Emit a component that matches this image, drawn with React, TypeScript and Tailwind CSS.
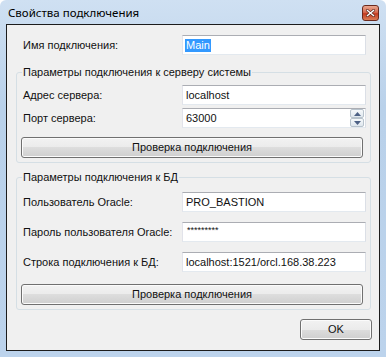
import React from 'react';

const font = { fontFamily: '"Liberation Sans", Arial, sans-serif' };

function TextBox({ value, selected, small }: { value: string; selected?: boolean; small?: boolean }) {
  return (
    <div className="w-[184px] h-[20px] bg-white border border-[#abadb3] border-l-[#e2e3ea] border-r-[#dbdfe6] border-b-[#e3e9ef] flex items-center pl-[2px] text-[11px] leading-[13px] text-[#111]">
      {selected ? (
        <span className="bg-[#3399ff] text-white px-[1px]">{value}</span>
      ) : small ? (
        <span className="px-[2px] text-[9px] leading-[9px] mb-[3px]">{value}</span>
      ) : (
        <span className="px-[1px]">{value}</span>
      )}
    </div>
  );
}

function SpinBox({ value }: { value: string }) {
  return (
    <div className="w-[184px] h-[20px] bg-white border border-[#abadb3] border-l-[#e2e3ea] border-r-[#dbdfe6] border-b-[#e3e9ef] flex items-center pl-[2px] text-[11px] leading-[13px] text-[#111]">
      <span className="flex-1 px-[1px]">{value}</span>
      <div className="flex flex-col w-[14px] h-[18px] mr-[1px]">
        <div className="h-[9px] border border-[#b8c3cc] rounded-[2px] bg-[linear-gradient(to_bottom,#f6f9fb,#dfe7ee)] flex items-center justify-center">
          <svg width="7" height="4" viewBox="0 0 7 4"><path d="M0 4 L3.5 0 L7 4 Z" fill="#4d6185" /></svg>
        </div>
        <div className="h-[9px] border border-[#b8c3cc] rounded-[2px] bg-[linear-gradient(to_bottom,#f6f9fb,#dfe7ee)] flex items-center justify-center">
          <svg width="7" height="4" viewBox="0 0 7 4"><path d="M0 0 L3.5 4 L7 0 Z" fill="#4d6185" /></svg>
        </div>
      </div>
    </div>
  );
}

function Button({ label, className }: { label: string; className?: string }) {
  return (
    <div
      className={
        'h-[21px] border border-[#707070] rounded-[3px] shadow-[inset_0_0_0_1px_#fbfbfb] bg-[linear-gradient(to_bottom,#f2f2f2_0%,#ebebeb_50%,#dddddd_50%,#cfcfcf_100%)] flex items-center justify-center text-[11px] text-[#111] ' +
        (className ?? '')
      }
    >
      {label}
    </div>
  );
}

function Row({ label, children, className }: { label: string; children: React.ReactNode; className?: string }) {
  return (
    <div className={'flex items-center ' + (className ?? '')}>
      <div className="w-[159px] text-[11px] leading-[13px] text-[#111]">{label}</div>
      {children}
    </div>
  );
}

export default function App() {
  return (
    <div className="w-[386px] h-[357px] bg-[linear-gradient(to_bottom,#cfe0f2,#b9d1ea_30%,#bcd3ec)] rounded-t-[6px] flex flex-col" style={font}>
      <div className="h-[24px] flex items-center pl-[8px] pr-[6px]">
        <span className="text-[11.5px] text-black flex-1 pt-[1px]" style={{ fontFamily: '"Noto Sans", "Liberation Sans", sans-serif' }}>
          Свойства подключения
        </span>
        <div className="w-[17px] h-[16px] rounded-[3px] border border-[#6b2a1e] bg-[linear-gradient(to_bottom,#eaa890,#d66a50_45%,#c23a1f_55%,#da7d55)] flex items-center justify-center mt-[1px] mr-[1px]">
          <svg width="9" height="8" viewBox="0 0 9 8">
            <path d="M1.5 1.5 L7.5 6.5 M7.5 1.5 L1.5 6.5" stroke="#5a2418" strokeWidth="2.8" strokeLinecap="square" />
            <path d="M1.5 1.5 L7.5 6.5 M7.5 1.5 L1.5 6.5" stroke="#ffffff" strokeWidth="1.5" strokeLinecap="square" />
          </svg>
        </div>
      </div>
      <div className="mx-[6px] h-[327px] border border-[#1c1c1c] bg-[#f0f0f0] flex flex-col">
        <Row label="Имя подключения:" className="mt-[10px] pl-[16px]">
          <TextBox value="Main" selected />
        </Row>

        <fieldset className="mt-[11px] ml-[9px] w-[355px] border border-[#d5dfe5] rounded-[3px] pb-[4px]">
          <legend className="ml-[5px] px-[1px] text-[11px] leading-[13px] text-[#111]">Параметры подключения к серверу системы</legend>
          <Row label="Адрес сервера:" className="mt-[6px] pl-[6px]">
            <TextBox value="localhost" />
          </Row>
          <Row label="Порт сервера:" className="mt-[3px] pl-[6px]">
            <SpinBox value="63000" />
          </Row>
          <Button label="Проверка подключения" className="mt-[9px] ml-[4px] w-[342px]" />
        </fieldset>

        <fieldset className="mt-[8px] ml-[9px] w-[355px] border border-[#d5dfe5] rounded-[3px] pb-[4px]">
          <legend className="ml-[5px] px-[1px] text-[11px] leading-[13px] text-[#111]">Параметры подключения к БД</legend>
          <Row label="Пользователь Oracle:" className="mt-[8px] pl-[6px]">
            <TextBox value="PRO_BASTION" />
          </Row>
          <Row label="Пароль пользователя Oracle:" className="mt-[10px] pl-[6px]">
            <TextBox value="*********" small />
          </Row>
          <Row label="Строка подключения к БД:" className="mt-[10px] pl-[6px]">
            <TextBox value="localhost:1521/orcl.168.38.223" />
          </Row>
          <Button label="Проверка подключения" className="mt-[12px] ml-[4px] w-[342px]" />
        </fieldset>

        <div className="flex justify-end pr-[7px] mt-[9px]">
          <Button label="OK" className="w-[72px]" />
        </div>
      </div>
    </div>
  );
}
